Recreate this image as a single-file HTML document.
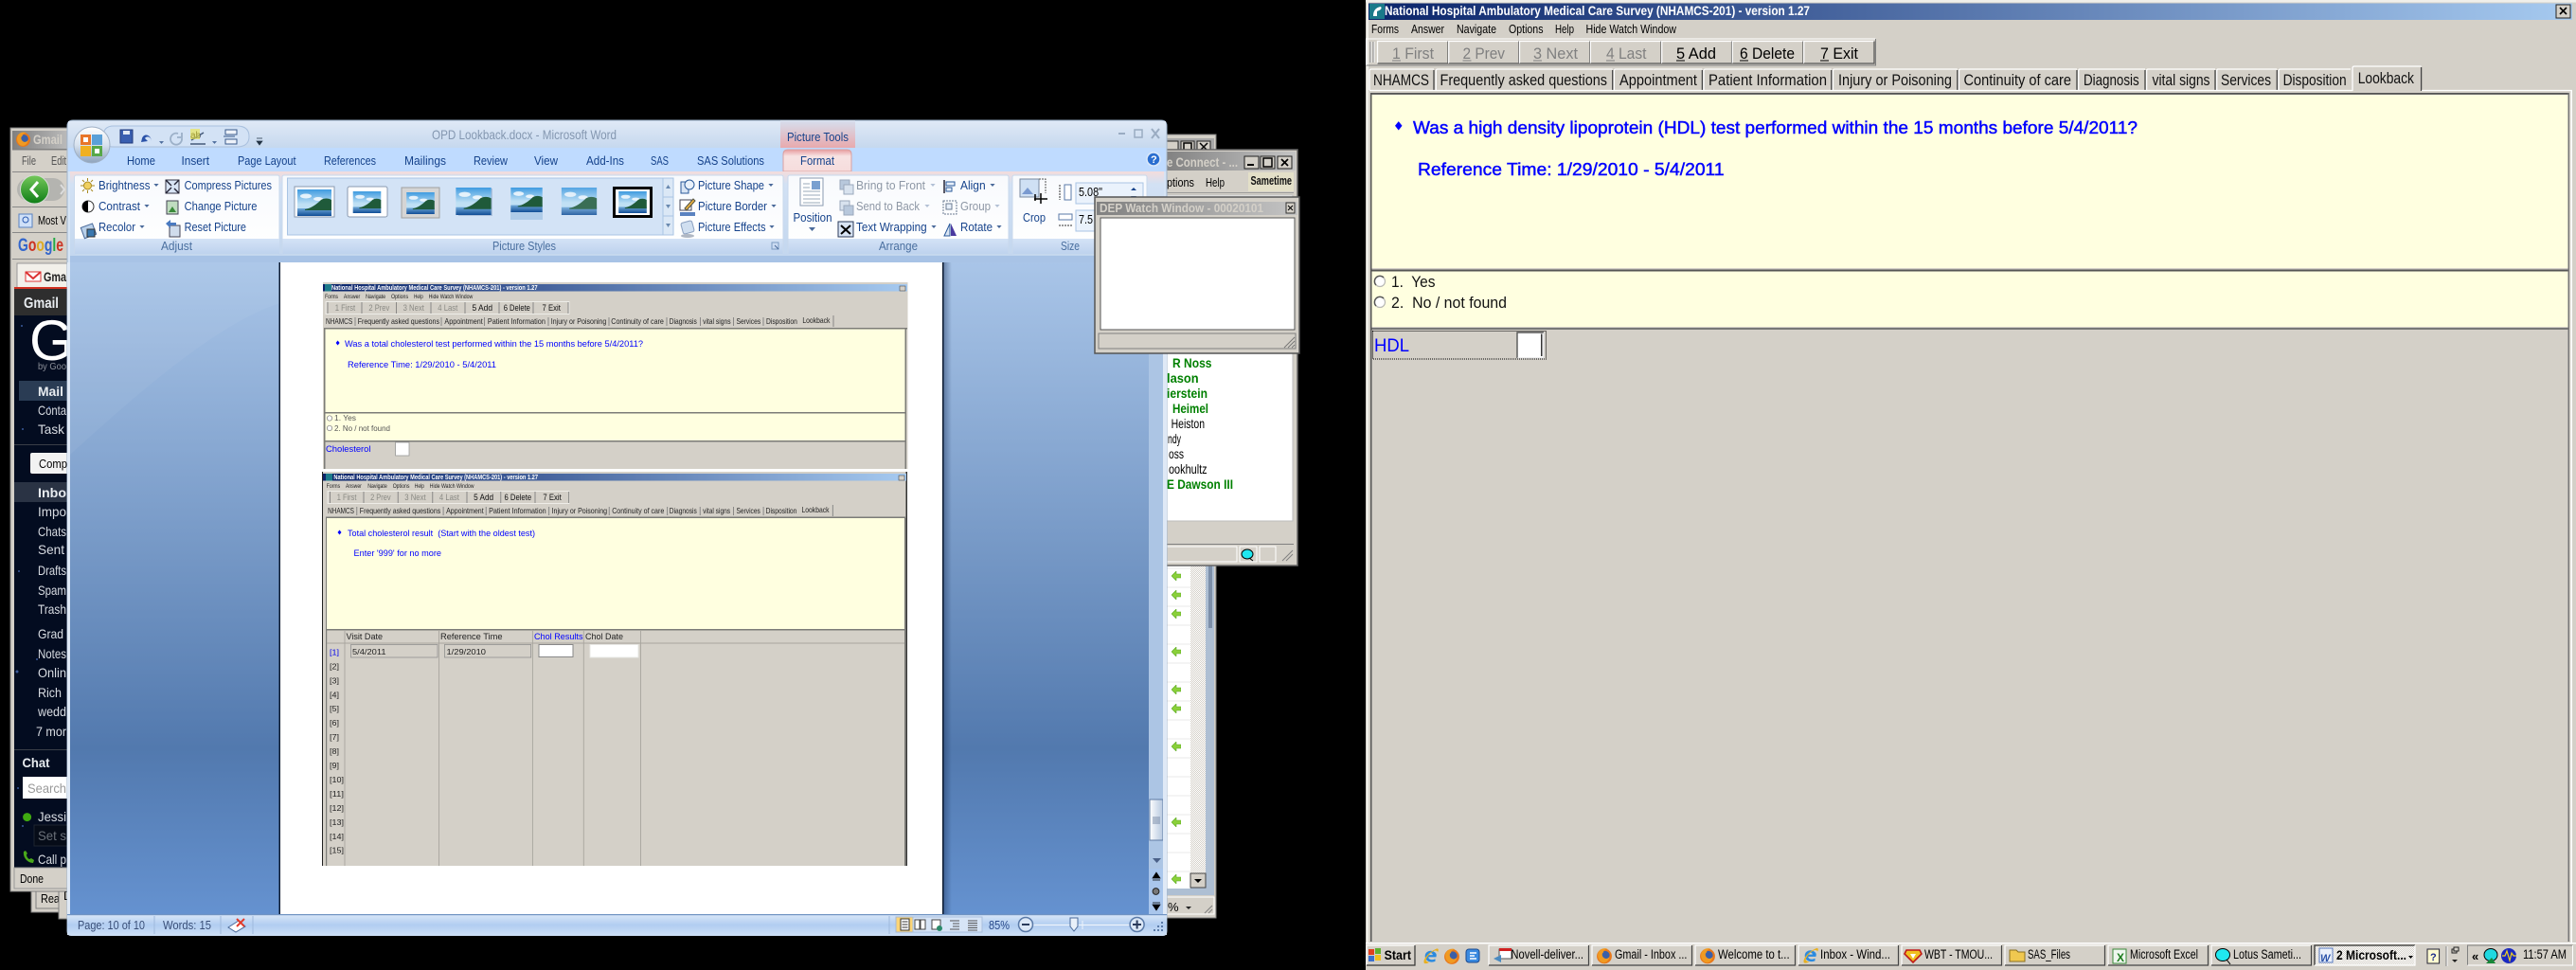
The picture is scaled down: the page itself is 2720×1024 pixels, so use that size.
<!DOCTYPE html>
<html><head><meta charset="utf-8"><title>Screenshot</title>
<style>
html,body{margin:0;padding:0;background:#000;width:2720px;height:1024px;overflow:hidden}
svg{display:block}
text{font-family:"Liberation Sans",sans-serif;white-space:pre}
.w{font-size:12.5px;fill:#15428b}
.g{font-size:12.5px;fill:#8d97a5}
.k{font-size:13px;fill:#000}
.gm{font-size:14px;fill:#d8dce2}
.gb{font-size:14px;fill:#e8ecf0;font-weight:bold}
.s{font-size:6.5px;fill:#222}
.sd{font-size:9.5px;fill:#8a8a84}
.sk{font-size:9.5px;fill:#111}
.st{font-size:8.5px;fill:#222}
.sb{font-size:9.5px;fill:#0000ff}
.sbb{font-size:9.5px;fill:#0000ff;font-weight:bold}
.m{font-size:12.5px;fill:#000}
.b{font-size:17px;fill:#000}
.d{font-size:17px;fill:#808080}
.t{font-size:16.5px;fill:#111}
.tb{font-size:13.5px;fill:#000}
.sg{font-size:14px;fill:#008000;font-weight:bold}
.q{font-size:18px;fill:#0000ff;stroke:#0000ff;stroke-width:.45px}
</style></head><body>
<svg xmlns="http://www.w3.org/2000/svg" width="2720" height="1024" viewBox="0 0 2720 1024">
<defs>
<linearGradient id="cap" x1="0" x2="1" y1="0" y2="0"><stop offset="0" stop-color="#0a246a"/><stop offset="1" stop-color="#a6caf0"/></linearGradient>
<linearGradient id="gcap" x1="0" x2="1" y1="0" y2="0"><stop offset="0" stop-color="#808080"/><stop offset="1" stop-color="#c4c4c4"/></linearGradient>
<linearGradient id="doc" x1="0" x2="0" y1="0" y2="1"><stop offset="0" stop-color="#a9c5e8"/><stop offset=".746" stop-color="#5279ae"/><stop offset="1" stop-color="#6592d0"/></linearGradient>
<linearGradient id="shd" x1="0" x2="1" y1="0" y2="0"><stop offset="0" stop-color="#1a3058" stop-opacity=".45"/><stop offset="1" stop-color="#1a3058" stop-opacity="0"/></linearGradient>
<linearGradient id="wt" x1="0" x2="0" y1="0" y2="1"><stop offset="0" stop-color="#dfe9f6"/><stop offset="1" stop-color="#c6d8ee"/></linearGradient>
<linearGradient id="grp" x1="0" x2="0" y1="0" y2="1"><stop offset="0" stop-color="#f8fafd"/><stop offset="1" stop-color="#fff"/></linearGradient>
<linearGradient id="lab" x1="0" x2="0" y1="0" y2="1"><stop offset="0" stop-color="#d4e3f6"/><stop offset="1" stop-color="#bed3ee"/></linearGradient>
<linearGradient id="pink" x1="0" x2="0" y1="0" y2="1"><stop offset="0" stop-color="#d6dfee"/><stop offset="1" stop-color="#e8a9ad"/></linearGradient>
<linearGradient id="pink2" x1="0" x2="0" y1="0" y2="1"><stop offset="0" stop-color="#e79c9f"/><stop offset=".3" stop-color="#f7e3e3"/><stop offset="1" stop-color="#f6dcdc"/></linearGradient>
<linearGradient id="rib" x1="0" x2="0" y1="0" y2="1"><stop offset="0" stop-color="#f3dcdc"/><stop offset=".15" stop-color="#d2e1f4"/><stop offset="1" stop-color="#c3d7ef"/></linearGradient>
<linearGradient id="stat" x1="0" x2="0" y1="0" y2="1"><stop offset="0" stop-color="#dbe8f8"/><stop offset=".5" stop-color="#b1cdf1"/><stop offset="1" stop-color="#cfe0f6"/></linearGradient>
<linearGradient id="sky" x1="0" x2="0" y1="0" y2="1"><stop offset="0" stop-color="#3f9be0"/><stop offset=".55" stop-color="#bfe0f4"/></linearGradient>
<linearGradient id="wat" x1="0" x2="0" y1="0" y2="1"><stop offset="0" stop-color="#6fa8d8"/><stop offset="1" stop-color="#114d96"/></linearGradient>
<linearGradient id="off" x1="0" x2="0" y1="0" y2="1"><stop offset="0" stop-color="#fff"/><stop offset=".5" stop-color="#d8e2ee"/><stop offset="1" stop-color="#8ea3bc"/></linearGradient>
<linearGradient id="grn" x1="0" x2="0" y1="0" y2="1"><stop offset="0" stop-color="#75c95b"/><stop offset="1" stop-color="#0e7d16"/></linearGradient>
<linearGradient id="thb" x1="0" x2="1" y1="0" y2="0"><stop offset="0" stop-color="#fff"/><stop offset=".5" stop-color="#d8e2ee"/><stop offset="1" stop-color="#b6c8e0"/></linearGradient>
<filter id="bl" x="-2%" y="-2%" width="104%" height="104%"><feGaussianBlur stdDeviation=".3"/></filter>
<pattern id="dith" width="2" height="2" patternUnits="userSpaceOnUse"><rect width="2" height="2" fill="#fff"/><rect width="1" height="1" fill="#d4d0c8"/><rect x="1" y="1" width="1" height="1" fill="#d4d0c8"/></pattern>
<symbol id="pic" viewBox="0 0 36 28" width="36" height="28">
<rect width="36" height="28" fill="url(#sky)"/>
<ellipse cx="9" cy="7" rx="6" ry="2.5" fill="#fff" opacity=".8"/><ellipse cx="22" cy="10" rx="5" ry="2" fill="#fff" opacity=".8"/>
<rect y="20" width="36" height="8" fill="url(#wat)"/>
<path d="M8 21 C14 20 20 16 25 11 C28 9 33 9 36 11 V22 H8Z" fill="#1f5a3a"/>
</symbol>
<symbol id="ff" viewBox="0 0 20 20" width="20" height="20">
<circle cx="10" cy="10.5" r="8.8" fill="#e8781a"/><circle cx="11" cy="9.5" r="5.2" fill="#3a5fa8"/><path d="M3 6 C5 2 10 0 14 2 C11 2 9 4 9 6 C7 7 7 10 9 12 C11 14 14 14 16 11 C16 15 12 19 8 18 C4 17 1 11 3 6Z" fill="#f09a22"/>
</symbol>
<symbol id="ie" viewBox="0 0 20 20" width="20" height="20">
<path d="M16 11 H7 C7 14 11 15 15 13 V16 C10 18 3 16 3 10 C3 4 10 2 14 5 C17 7 16.5 9 16 11Z M7 8.5 H12 C12 5.5 7.5 5.5 7 8.5Z" fill="#2a8ae0" fill-rule="evenodd"/>
<path d="M2 18 C0 14 7 5 17 1 C19 1 19 3 18 5 C17 3 15 3 13 4 C8 7 5 11 4 15 C5 16 6 17 8 17 C6 18.5 3 19 2 18Z" fill="#e8b020"/>
</symbol>
<symbol id="ar" viewBox="0 0 7 4" width="7" height="4"><path d="M0 0H7L3.5 4Z" fill="#4a6a9a"/></symbol>
<symbol id="gar" viewBox="0 0 10 10" width="10" height="10"><path d="M5 0 L0 5 L5 10 V7 H10 V3 H5Z" fill="#8ad03a" stroke="#5aa820" stroke-width=".6"/></symbol>
<symbol id="dia" viewBox="0 0 8 10" width="8" height="10"><path d="M4 0 L8 5 L4 10 L0 5Z" fill="#0000ff"/></symbol>
</defs>

<rect width="2720" height="1024" fill="#000"/>

<!-- Back windows left -->
<rect x="33" y="900" width="60" height="63" fill="#d4d0c8" stroke="#808080"/>
<rect x="38" y="940" width="40" height="19" fill="#d4d0c8" stroke="#808080"/>
<text class="k" x="43" y="953" textLength="20" lengthAdjust="spacingAndGlyphs">Rea</text>
<rect x="62" y="900" width="30" height="70" fill="#d4d0c8" stroke="#808080"/>
<text class="k" x="67" y="950">D</text>

<!-- Firefox Gmail window -->
<rect x="11" y="135" width="70" height="806" fill="#d4d0c8" stroke="#808080"/>
<rect x="13" y="138" width="68" height="19" fill="url(#gcap)"/>
<use href="#ff" x="16" y="138" width="17" height="18"/>
<text x="35" y="152" font-size="14" font-weight="bold" fill="#d4d0c8" textLength="31" lengthAdjust="spacingAndGlyphs">Gmail</text>
<rect x="13" y="157" width="68" height="1.5" fill="#808080"/>
<text class="k" x="23" y="174" fill="#555" textLength="15" lengthAdjust="spacingAndGlyphs" style="fill:#555">File</text>
<text class="k" x="54" y="174" textLength="16" lengthAdjust="spacingAndGlyphs" style="fill:#555">Edit</text>
<rect x="13" y="181" width="68" height="1" fill="#888"/>
<rect x="18" y="188" width="50" height="24" rx="12" fill="#b4b4b0"/>
<circle cx="36.5" cy="200" r="15" fill="url(#grn)" stroke="#d8dcd8"/>
<path d="M40 192 L33 200 L40 208" fill="none" stroke="#fff" stroke-width="3"/>
<path d="M64 195 L68 200 L64 205" fill="none" stroke="#ddd" stroke-width="2"/>
<rect x="13" y="218" width="68" height="1" fill="#888"/>
<rect x="20" y="226" width="14" height="14" fill="#cfe0f8" stroke="#5a82c0"/>
<circle cx="27" cy="232" r="3" fill="none" stroke="#2a5ab0"/>
<text class="k" x="40" y="237" textLength="30" lengthAdjust="spacingAndGlyphs">Most V</text>
<rect x="13" y="245" width="68" height="1" fill="#888"/>
<text x="19" y="265" font-size="19" font-family="Liberation Serif" textLength="48" lengthAdjust="spacingAndGlyphs" font-weight="bold"><tspan fill="#3366cc">G</tspan><tspan fill="#cc3322">o</tspan><tspan fill="#ddaa22">o</tspan><tspan fill="#3366cc">g</tspan><tspan fill="#22aa44">l</tspan><tspan fill="#cc3322">e</tspan></text>
<rect x="13" y="273" width="68" height="1" fill="#888"/>
<rect x="18" y="278" width="60" height="26" fill="#f2f0ea" stroke="#999"/>
<path d="M27 287 H43 V297 H27Z" fill="#fff" stroke="#d33"/><path d="M27 287 L35 294 L43 287" fill="none" stroke="#d33" stroke-width="2"/>
<text x="46" y="297" font-size="13.5" font-weight="bold" fill="#222" textLength="24" lengthAdjust="spacingAndGlyphs">Gma</text>
<rect x="15" y="303" width="60" height="2" fill="#d03020"/>
<rect x="15" y="305" width="60" height="28" fill="#2e2e2e"/>
<text class="gb" x="25" y="325" font-size="16" textLength="37" lengthAdjust="spacingAndGlyphs" style="font-size:16px">Gmail</text>
<rect x="15" y="333" width="60" height="583" fill="#030c20"/>
<g fill="#3a5a9a"><circle cx="20" cy="603" r="1"/><circle cx="18" cy="709" r="1.5"/><circle cx="39" cy="696" r="1"/><circle cx="52" cy="430" r="1"/><circle cx="24" cy="453" r="1"/><circle cx="19" cy="832" r="1"/><circle cx="24" cy="872" r="1"/><circle cx="23" cy="344" r="1"/><circle cx="52" cy="484" r="1"/></g>
<text x="31" y="380" font-family="Liberation Serif" font-size="60" fill="#fff">G</text>
<text x="40" y="390" font-family="Liberation Serif" font-size="10" fill="#8a8f98" textLength="30" lengthAdjust="spacingAndGlyphs">by Goo</text>
<rect x="20" y="402" width="55" height="21" fill="#2a3c54"/>
<text class="gb" x="40" y="418" textLength="27" lengthAdjust="spacingAndGlyphs">Mail</text>
<text class="gm" x="40" y="438" textLength="30" lengthAdjust="spacingAndGlyphs">Conta</text>
<text class="gm" x="40" y="458" textLength="28" lengthAdjust="spacingAndGlyphs">Task</text>
<rect x="15" y="469" width="60" height="1" fill="#3a3f48"/>
<rect x="32" y="478" width="44" height="22" rx="2" fill="#f2f2f2"/>
<text class="k" x="41" y="494" textLength="30" lengthAdjust="spacingAndGlyphs">Comp</text>
<rect x="15" y="509" width="60" height="21" fill="#2a3344"/>
<text class="gb" x="40" y="525" textLength="30" lengthAdjust="spacingAndGlyphs">Inbo</text>
<text class="gm" x="40" y="545" textLength="30" lengthAdjust="spacingAndGlyphs">Impo</text>
<text class="gm" x="40" y="566" textLength="30" lengthAdjust="spacingAndGlyphs">Chats</text>
<text class="gm" x="40" y="585" textLength="28" lengthAdjust="spacingAndGlyphs">Sent</text>
<text class="gm" x="40" y="607" textLength="30" lengthAdjust="spacingAndGlyphs">Drafts</text>
<text class="gm" x="40" y="628" textLength="30" lengthAdjust="spacingAndGlyphs">Spam</text>
<text class="gm" x="40" y="648" textLength="30" lengthAdjust="spacingAndGlyphs">Trash</text>
<text class="gm" x="40" y="674" textLength="27" lengthAdjust="spacingAndGlyphs">Grad</text>
<text class="gm" x="40" y="695" textLength="30" lengthAdjust="spacingAndGlyphs">Notes</text>
<text class="gm" x="40" y="715" textLength="30" lengthAdjust="spacingAndGlyphs">Onlin</text>
<text class="gm" x="40" y="736" textLength="25" lengthAdjust="spacingAndGlyphs">Rich</text>
<text class="gm" x="40" y="756" textLength="30" lengthAdjust="spacingAndGlyphs">wedd</text>
<text class="gm" x="38" y="777" textLength="32" lengthAdjust="spacingAndGlyphs">7 mor</text>
<rect x="15" y="791" width="60" height="1" fill="#3a3f48"/>
<text class="gb" x="23.5" y="810" textLength="29" lengthAdjust="spacingAndGlyphs">Chat</text>
<rect x="24" y="820" width="50" height="23" fill="#fff"/>
<text x="29" y="837" font-size="14" fill="#999" textLength="41" lengthAdjust="spacingAndGlyphs">Search</text>
<circle cx="28.6" cy="862.6" r="4.5" fill="#3faa10"/>
<text class="gm" x="40" y="867" textLength="30" lengthAdjust="spacingAndGlyphs">Jessi</text>
<rect x="36" y="871" width="40" height="22" fill="#060c18" stroke="#1d2430"/>
<text x="40" y="887" font-size="14" fill="#6a7078" textLength="30" lengthAdjust="spacingAndGlyphs">Set s</text>
<path d="M25 899 C24 905 29 911 35 911 L36 908 L33 906 L31 907 C29 906 28 904 28 902 L29 901 L27 898Z" fill="#49a81a"/>
<text class="gm" x="40" y="912" textLength="30" lengthAdjust="spacingAndGlyphs">Call p</text>
<rect x="15" y="916" width="60" height="22" fill="#d4d0c8" stroke="#999"/>
<text class="k" x="21" y="932" textLength="25" lengthAdjust="spacingAndGlyphs">Done</text>

<!-- Back windows right -->
<rect x="1225" y="142" width="59" height="30" fill="#d4d0c8" stroke="#808080"/>
<rect x="1228" y="146" width="54" height="16" fill="#a8a8a8"/>
<rect x="1232" y="149" width="12" height="12" fill="#d4d0c8" stroke="#222"/>
<rect x="1247" y="149" width="14" height="12" fill="#d4d0c8" stroke="#222"/><rect x="1250" y="151" width="8" height="8" fill="none" stroke="#000" stroke-width="1.5"/>
<rect x="1264" y="149" width="14" height="12" fill="#d4d0c8" stroke="#222"/><path d="M1267 151 L1275 159 M1275 151 L1267 159" stroke="#000" stroke-width="1.5"/>

<!-- list window with arrows -->
<rect x="1225" y="590" width="59" height="379" fill="#d4d0c8" stroke="#808080"/>
<rect x="1230" y="595" width="52" height="350" fill="#aebfd3"/>
<rect x="1230" y="597" width="27" height="341" fill="#fff"/>
<g stroke="#e8e8e8"><path d="M1230 600H1257M1230 620H1257M1230 640H1257M1230 660H1257M1230 680H1257M1230 700H1257M1230 720H1257M1230 740H1257M1230 760H1257M1230 780H1257M1230 800H1257M1230 820H1257M1230 840H1257M1230 860H1257M1230 880H1257M1230 900H1257M1230 920H1257"/></g>
<rect x="1257" y="597" width="16" height="325" fill="url(#dith)"/>
<rect x="1257" y="922" width="16" height="15" fill="#d4d0c8" stroke="#444"/><path d="M1261 928 H1269 L1265 932Z" fill="#000"/>
<rect x="1276" y="597" width="4" height="66" fill="#7d8fa8"/>
<use href="#gar" x="1237" y="603"/><use href="#gar" x="1237" y="623"/><use href="#gar" x="1237" y="643"/><use href="#gar" x="1237" y="683"/><use href="#gar" x="1237" y="723"/><use href="#gar" x="1237" y="743"/><use href="#gar" x="1237" y="783"/><use href="#gar" x="1237" y="863"/><use href="#gar" x="1237" y="923"/>
<rect x="1230" y="947" width="52" height="18" fill="#d4d0c8" stroke="#fff"/>
<path d="M1252 957 H1258 L1255 960Z" fill="#222"/>
<text class="k" x="1233" y="962">%</text>
<path d="M1272 964 L1280 956 M1276 964 L1280 960" stroke="#808080"/>

<!-- Sametime -->
<rect x="1225" y="158" width="145" height="439" fill="#d4d0c8" stroke="#666" stroke-width="1.5"/>
<rect x="1228" y="160" width="140" height="20" fill="url(#gcap)"/>
<text x="1232" y="176" font-size="14" font-weight="bold" fill="#d4d0c8" textLength="75" lengthAdjust="spacingAndGlyphs">e Connect - ...</text>
<rect x="1314" y="165" width="15" height="13" fill="#d4d0c8" stroke="#222"/><rect x="1317" y="173" width="7" height="2" fill="#000"/>
<rect x="1331" y="165" width="15" height="13" fill="#d4d0c8" stroke="#222"/><rect x="1334" y="167" width="9" height="9" fill="none" stroke="#000" stroke-width="1.5"/>
<rect x="1349" y="165" width="15" height="13" fill="#d4d0c8" stroke="#222"/><path d="M1353 168 L1360 175 M1360 168 L1353 175" stroke="#000" stroke-width="1.7"/>
<text class="k" x="1232" y="197" textLength="29" lengthAdjust="spacingAndGlyphs">ptions</text>
<text class="k" x="1273" y="197" textLength="20" lengthAdjust="spacingAndGlyphs">Help</text>
<rect x="1318" y="182" width="48" height="20" fill="#e4e0c8"/>
<text x="1320.5" y="195" font-size="13" font-weight="bold" fill="#111" textLength="43.5" lengthAdjust="spacingAndGlyphs">Sametime</text>
<rect x="1228" y="203" width="138" height="1" fill="#999"/>
<rect x="1228" y="206" width="137" height="344" fill="#fff" stroke="#bbb"/>
<text class="sg" x="1238" y="388" textLength="41.5" lengthAdjust="spacingAndGlyphs">R Noss</text>
<text class="sg" x="1232" y="404" textLength="33.6" lengthAdjust="spacingAndGlyphs">lason</text>
<text class="sg" x="1232" y="420" textLength="43" lengthAdjust="spacingAndGlyphs">ierstein</text>
<text class="sg" x="1238" y="436" textLength="38" lengthAdjust="spacingAndGlyphs">Heimel</text>
<text x="1236.6" y="452" font-size="14" fill="#000" textLength="35.4" lengthAdjust="spacingAndGlyphs">Heiston</text>
<text x="1233" y="468" font-size="14" fill="#000" textLength="14" lengthAdjust="spacingAndGlyphs">ndy</text>
<text x="1234" y="484" font-size="14" fill="#000" textLength="16" lengthAdjust="spacingAndGlyphs">oss</text>
<text x="1234" y="500" font-size="14" fill="#000" textLength="40.6" lengthAdjust="spacingAndGlyphs">ookhultz</text>
<text class="sg" x="1232" y="516" textLength="70" lengthAdjust="spacingAndGlyphs">E Dawson III</text>
<rect x="1228" y="574" width="138" height="1" fill="#808080"/>
<rect x="1228" y="577" width="78" height="16" fill="#d4d0c8" stroke="#fff"/>
<rect x="1309" y="577" width="18" height="16" fill="#d4d0c8" stroke="#fff"/>
<ellipse cx="1317" cy="585" rx="6" ry="5" fill="#20e8f0" stroke="#000"/><path d="M1319 589 L1323 592" stroke="#000"/>
<rect x="1330" y="577" width="17" height="16" fill="#d4d0c8" stroke="#fff"/>
<path d="M1354 592 L1365 581 M1358 592 L1365 585" stroke="#808080"/>

<!-- WORD -->
<path d="M71 133 Q71 127 77 127 H1226 Q1232 127 1232 133 V983 Q1232 987 1228 987 H75 Q71 987 71 983Z" fill="#d6e4f5" stroke="#a0b4cc"/>
<rect x="72" y="128" width="1159" height="28" fill="url(#wt)"/>
<rect x="72" y="156" width="1159" height="25" fill="#bfdbff"/>
<path d="M109 144 Q109 133 120 133 H250 Q263 133 263 144 Q263 155 250 155 H120 Q109 155 109 144Z" fill="#d3e2f5" stroke="#a9c0de"/>
<rect x="127" y="143" width="13" height="14" fill="#3a5fb0" stroke="#223a7a" transform="translate(0,-6)"/>
<rect x="130" y="138" width="7" height="4" fill="#e0e8f4"/>
<path d="M150 146 C152 140 160 142 160 150 C160 144 155 143 153 146 L156 149 L149 150Z" fill="#2a52a8"/>
<use href="#ar" x="168" y="149" width="5" height="3"/>
<path d="M188 141 A6 6 0 1 0 192 146 M192 140 V145 H187" fill="none" stroke="#9cb0c8" stroke-width="1.8"/>
<text x="201" y="146" font-size="10" fill="#222">ab</text>
<path d="M202 148 L215 140 M201 152 H217" stroke="#445a7a" stroke-width="1.5"/><rect x="201" y="136" width="10" height="11" fill="#f0e840" opacity=".6"/>
<use href="#ar" x="224" y="149" width="5" height="3"/>
<path d="M238 137 H250 V142 H238Z M238 147 H250 V152 H238Z M236 144 H248" fill="#eef3fa" stroke="#3a5a8a"/>
<path d="M271 149 H277 L274 153Z M271 146 H277" fill="#234" stroke="#234" stroke-width=".7"/>
<circle cx="97" cy="153" r="19" fill="url(#off)" stroke="#9fb0c5"/>
<rect x="85" y="142" width="11" height="11" fill="#e8762a"/><rect x="97" y="142" width="11" height="11" fill="#5aa0d8"/><rect x="85" y="154" width="11" height="11" fill="#f0b020"/><rect x="97" y="154" width="11" height="11" fill="#58a848"/>
<rect x="88" y="145" width="5" height="5" fill="#fff"/><rect x="100" y="157" width="5" height="5" fill="#fff"/>
<text x="456" y="147" font-size="14" fill="#8497b0" textLength="195" lengthAdjust="spacingAndGlyphs">OPD Lookback.docx - Microsoft Word</text>
<rect x="824" y="127" width="79" height="29" fill="url(#pink)"/>
<text class="w" x="831" y="149" textLength="65" lengthAdjust="spacingAndGlyphs">Picture Tools</text>
<path d="M1181 141 H1188" stroke="#9aacc2" stroke-width="2"/><rect x="1198" y="137" width="8" height="8" fill="none" stroke="#9aacc2" stroke-width="1.5"/><path d="M1216 136 L1224 146 M1224 136 L1216 146" stroke="#9aacc2" stroke-width="2"/>
<text class="w" x="134" y="174" textLength="30" lengthAdjust="spacingAndGlyphs">Home</text>
<text class="w" x="191.5" y="174" textLength="29.5" lengthAdjust="spacingAndGlyphs">Insert</text>
<text class="w" x="251" y="174" textLength="61.5" lengthAdjust="spacingAndGlyphs">Page Layout</text>
<text class="w" x="342" y="174" textLength="55" lengthAdjust="spacingAndGlyphs">References</text>
<text class="w" x="427" y="174" textLength="44" lengthAdjust="spacingAndGlyphs">Mailings</text>
<text class="w" x="500" y="174" textLength="36" lengthAdjust="spacingAndGlyphs">Review</text>
<text class="w" x="564" y="174" textLength="25" lengthAdjust="spacingAndGlyphs">View</text>
<text class="w" x="619" y="174" textLength="40" lengthAdjust="spacingAndGlyphs">Add-Ins</text>
<text class="w" x="687" y="174" textLength="19" lengthAdjust="spacingAndGlyphs">SAS</text>
<text class="w" x="736" y="174" textLength="71" lengthAdjust="spacingAndGlyphs">SAS Solutions</text>
<path d="M827 181 V163 Q827 158 832 158 H894 Q899 158 899 163 V181Z" fill="url(#pink2)" stroke="#d9a0a0"/>
<text class="w" x="845" y="174" textLength="36" lengthAdjust="spacingAndGlyphs">Format</text>
<circle cx="1218" cy="168" r="7" fill="#2a6ed0" stroke="#dbe8f8" stroke-width="1.5"/><text x="1215" y="172" font-size="11" font-weight="bold" fill="#fff">?</text>

<rect x="74" y="181" width="1155" height="89" fill="url(#rib)"/>
<rect x="78.5" y="185" width="216.5" height="83" rx="2" fill="url(#grp)" stroke="#c8d8ec"/>
<rect x="298" y="185" width="529" height="83" rx="2" fill="url(#grp)" stroke="#c8d8ec"/>
<rect x="832" y="185" width="233" height="83" rx="2" fill="url(#grp)" stroke="#c8d8ec"/>
<rect x="1069" y="185" width="142" height="83" rx="2" fill="url(#grp)" stroke="#c8d8ec"/>
<rect x="79" y="252" width="216" height="16" fill="url(#lab)"/><rect x="298.5" y="252" width="528" height="16" fill="url(#lab)"/><rect x="832.5" y="252" width="232" height="16" fill="url(#lab)"/><rect x="1069.5" y="252" width="141" height="16" fill="url(#lab)"/>
<text class="w" x="170" y="264" textLength="33" lengthAdjust="spacingAndGlyphs" style="fill:#4a6f9f">Adjust</text>
<text class="w" x="520" y="264" textLength="67" lengthAdjust="spacingAndGlyphs" style="fill:#4a6f9f">Picture Styles</text>
<text class="w" x="928" y="264" textLength="41" lengthAdjust="spacingAndGlyphs" style="fill:#4a6f9f">Arrange</text>
<text class="w" x="1120" y="264" textLength="20" lengthAdjust="spacingAndGlyphs" style="fill:#4a6f9f">Size</text>
<!-- Adjust -->
<circle cx="92.5" cy="196" r="4" fill="#f0d060" stroke="#a88a20"/><path d="M92.5 188V191M92.5 201V204M85 196H88M97 196H100M87 190L89 192M96 200L98 202M87 202L89 200M96 192L98 190" stroke="#a88a20"/>
<text class="w" x="104" y="200" textLength="54.5" lengthAdjust="spacingAndGlyphs">Brightness</text><use href="#ar" x="162" y="194" width="6" height="3"/>
<circle cx="93" cy="218" r="6" fill="#fff" stroke="#333"/><path d="M93 212 A6 6 0 0 0 93 224Z" fill="#000"/>
<text class="w" x="104" y="222" textLength="44" lengthAdjust="spacingAndGlyphs">Contrast</text><use href="#ar" x="152" y="216" width="6" height="3"/>
<rect x="87" y="238" width="13" height="12" fill="#b8d0ea" stroke="#4a6a9a" transform="rotate(-20 93 244)"/><rect x="92" y="242" width="8" height="8" fill="#3a78b0" stroke="#333"/>
<text class="w" x="104" y="244" textLength="39" lengthAdjust="spacingAndGlyphs">Recolor</text><use href="#ar" x="147" y="238" width="6" height="3"/>
<rect x="175" y="190" width="14" height="14" fill="#d8e4f4" stroke="#334"/><path d="M175 190 L181 196 M189 190 L184 195 M175 204 L181 198 M189 204 L184 199" stroke="#223" stroke-width="1.4"/>
<text class="w" x="194.6" y="200" textLength="92.4" lengthAdjust="spacingAndGlyphs">Compress Pictures</text>
<rect x="176" y="212" width="12" height="14" fill="#c0dcc0" stroke="#445"/><path d="M178 224 L182 218 L186 224Z" fill="#3a8a3a"/>
<text class="w" x="194.6" y="222" textLength="76.8" lengthAdjust="spacingAndGlyphs">Change Picture</text>
<rect x="179" y="238" width="11" height="12" fill="#d0dcec" stroke="#445"/><path d="M175 236 L180 232 V235 H186 V238 H180 V241Z" fill="#4a7ac0"/>
<text class="w" x="194.6" y="244" textLength="65.4" lengthAdjust="spacingAndGlyphs">Reset Picture</text>
<!-- gallery -->
<rect x="303.5" y="188" width="397" height="60" fill="#d3e3f6" stroke="#a9c4e4"/>
<rect x="700" y="188" width="11" height="20" fill="#dbe8f6" stroke="#a9c4e4"/><rect x="700" y="208" width="11" height="20" fill="#dbe8f6" stroke="#a9c4e4"/><rect x="700" y="228" width="11" height="20" fill="#dbe8f6" stroke="#a9c4e4"/>
<path d="M703 199 H708 L705.5 195Z M703 216 H708 L705.5 220Z M703 236 H708 L705.5 240Z" fill="#6a8ab0"/>
<rect x="311" y="197" width="42" height="32" fill="#fff" stroke="#8a9ab0"/><use href="#pic" x="314" y="200"/>
<rect x="367" y="197" width="42" height="32" rx="2" fill="#fff" stroke="#8a9ab0"/><use href="#pic" x="372" y="202" width="31" height="23"/>
<rect x="424" y="198" width="40" height="32" fill="#d5d5d5" stroke="#a0a0a0"/><use href="#pic" x="428" y="203" width="32" height="23"/>
<rect x="484" y="199" width="36" height="29" fill="#8aa0c0" opacity=".5"/><use href="#pic" x="481" y="198" width="38" height="29"/>
<use href="#pic" x="537" y="198" width="38" height="26"/><rect x="539" y="224" width="34" height="8" fill="#9ec0e2" opacity=".7"/>
<use href="#pic" x="592" y="198" width="39" height="29" opacity=".85"/>
<rect x="647" y="197" width="42" height="33" fill="#000"/><rect x="650" y="200" width="36" height="27" fill="#fff"/><use href="#pic" x="652" y="202" width="32" height="23"/>
<!-- picture shape etc -->
<rect x="719" y="192" width="8" height="12" fill="#d8e4f4" stroke="#2a5a9a"/><circle cx="728" cy="195" r="5" fill="#e8f0fa" stroke="#2a5a9a"/>
<text class="w" x="737" y="200" textLength="70" lengthAdjust="spacingAndGlyphs">Picture Shape</text><use href="#ar" x="811" y="194" width="6" height="3"/>
<path d="M718 211 H730 V222 H718Z" fill="#fff" stroke="#445"/><path d="M723 220 L732 210 L734 212 L725 222Z" fill="#e8b040" stroke="#554"/><rect x="718" y="224" width="16" height="4" fill="#5a82c0"/>
<text class="w" x="737" y="222" textLength="73" lengthAdjust="spacingAndGlyphs">Picture Border</text><use href="#ar" x="814" y="216" width="6" height="3"/>
<rect x="720" y="234" width="12" height="12" rx="2" fill="#d0dff0" stroke="#8aa0c0" transform="rotate(-15 726 240)"/><ellipse cx="726" cy="249" rx="7" ry="2" fill="#b0b8c4"/>
<text class="w" x="737" y="244" textLength="71.5" lengthAdjust="spacingAndGlyphs">Picture Effects</text><use href="#ar" x="812" y="238" width="6" height="3"/>
<rect x="815" y="256" width="7" height="7" fill="none" stroke="#7a9ac0"/><path d="M818 259 L822 263" stroke="#4a6a9a"/>
<!-- arrange -->
<rect x="845" y="188" width="24" height="29" fill="#fff" stroke="#8a9ab0"/><rect x="857" y="191" width="9" height="9" fill="#7aa0d0"/><path d="M848 194H855M848 198H855M848 202H866M848 206H866M848 210H866M848 214H866" stroke="#9aa8b8"/>
<text class="w" x="837.5" y="234" textLength="41" lengthAdjust="spacingAndGlyphs">Position</text>
<use href="#ar" x="854" y="240" width="7" height="4"/>
<rect x="887" y="190" width="10" height="10" fill="#b8c8dc" stroke="#9aa8bc"/><rect x="891" y="195" width="10" height="10" fill="#d8e2ee" stroke="#9aa8bc"/>
<text class="g" x="904" y="200" textLength="73" lengthAdjust="spacingAndGlyphs">Bring to Front</text><use href="#ar" x="982" y="194" width="6" height="3" opacity=".4"/>
<rect x="887" y="212" width="10" height="10" fill="#d8e2ee" stroke="#9aa8bc"/><rect x="891" y="217" width="10" height="10" fill="#b8c8dc" stroke="#9aa8bc"/>
<text class="g" x="904" y="222" textLength="67" lengthAdjust="spacingAndGlyphs">Send to Back</text><use href="#ar" x="976" y="216" width="6" height="3" opacity=".4"/>
<rect x="885" y="234" width="16" height="16" fill="#d8e4f4" stroke="#2a3a5a"/><path d="M888 238 L898 247 M898 238 L888 247" stroke="#000" stroke-width="2"/>
<text class="w" x="904" y="244" textLength="74.6" lengthAdjust="spacingAndGlyphs">Text Wrapping</text><use href="#ar" x="983" y="238" width="6" height="3"/>
<path d="M997 190 V204" stroke="#223" stroke-width="1.5"/><rect x="999" y="192" width="9" height="4" fill="#e8f0fa" stroke="#2a5a9a"/><rect x="999" y="198" width="6" height="4" fill="#e8f0fa" stroke="#2a5a9a"/>
<text class="w" x="1014" y="200" textLength="26.6" lengthAdjust="spacingAndGlyphs">Align</text><use href="#ar" x="1045" y="194" width="6" height="3"/>
<rect x="996" y="212" width="14" height="14" fill="none" stroke="#6a7a90" stroke-dasharray="2 1"/><rect x="999" y="215" width="6" height="6" fill="#e8f0fa" stroke="#6a7a90"/>
<text class="g" x="1014" y="222" textLength="32" lengthAdjust="spacingAndGlyphs">Group</text><use href="#ar" x="1050" y="216" width="6" height="3" opacity=".4"/>
<path d="M997 249 L1003 236 V249Z" fill="#dbe6f4" stroke="#2a5a9a"/><path d="M1004 249 V236 L1010 249Z" fill="#4a3aa0"/>
<text class="w" x="1014" y="244" textLength="34" lengthAdjust="spacingAndGlyphs">Rotate</text><use href="#ar" x="1052" y="238" width="6" height="3"/>
<!-- size -->
<rect x="1077" y="189" width="20" height="19" fill="#cfe0f4" stroke="#7a8aa0"/><path d="M1079 205 L1085 198 L1091 205Z" fill="#7a9ad0"/>
<path d="M1097 189 H1104 V204" fill="none" stroke="#555" stroke-dasharray="2 1"/><path d="M1092 210 H1106 M1099 204 V215 M1093 205 V212 M1100 210" stroke="#000" stroke-width="1.5" fill="none"/>
<text class="w" x="1080" y="234" textLength="24" lengthAdjust="spacingAndGlyphs">Crop</text>
<rect x="1124" y="195" width="7" height="16" fill="#fff" stroke="#5a7aa8"/><path d="M1119 195 V211" stroke="#333" stroke-dasharray="2 1"/>
<rect x="1136" y="193" width="71" height="22" fill="#eaf2fc" stroke="#a9c4e4"/>
<text class="k" x="1139" y="207" textLength="25" lengthAdjust="spacingAndGlyphs">5.08"</text>
<path d="M1194 201 H1200 L1197 198Z M1194 207 H1200 L1197 210Z" fill="#15428b"/>
<rect x="1118" y="226" width="14" height="6" fill="#fff" stroke="#5a7aa8"/><path d="M1118 238 H1132" stroke="#333" stroke-dasharray="2 1"/>
<rect x="1136" y="222" width="71" height="22" fill="#eaf2fc" stroke="#a9c4e4"/>
<text class="k" x="1139" y="236" textLength="15" lengthAdjust="spacingAndGlyphs">7.5</text>

<!-- Document area -->
<rect x="74" y="270" width="1155" height="7" fill="#a8c3e6"/>
<rect x="74" y="277" width="1139" height="688" fill="url(#doc)"/>
<path d="M74 480 C140 420 230 340 296 320 V277 H74Z" fill="#fff" opacity=".05"/>
<rect x="996" y="277" width="9" height="688" fill="url(#shd)"/>
<rect x="296" y="277" width="699" height="688" fill="#fff"/>
<rect x="294.5" y="277" width="1.5" height="688" fill="#0c1a30"/><rect x="995" y="277" width="1.5" height="688" fill="#0c1a30"/>
<!-- scrollbar -->
<rect x="1213" y="277" width="15" height="640" fill="#8fb0d8" opacity=".6"/>
<rect x="1214" y="844" width="14" height="43" fill="url(#thb)" stroke="#5f7ba5"/>
<path d="M1217 863H1225M1217 865H1225M1217 867H1225M1217 869H1225" stroke="#7a8ca8"/>
<path d="M1217 906H1226L1221.5 911Z" fill="#4a6088"/>
<rect x="1213" y="917" width="15" height="48" fill="#a9c6ec"/>
<path d="M1217 929H1225M1221 921L1217 927H1225Z" fill="#000" stroke="#000" stroke-width=".7"/>
<circle cx="1220.5" cy="941" r="3.4" fill="#777" stroke="#222"/>
<path d="M1217 953H1225M1221 961L1217 955H1225Z" fill="#000" stroke="#000" stroke-width=".7"/>
<rect x="1228" y="277" width="4" height="710" fill="#dfe9f6"/>
<rect x="71" y="277" width="3" height="710" fill="#dfe9f6"/>

<!-- Embedded screenshots -->
<g filter="url(#bl)">
<!-- shot 1 -->
<rect x="341" y="298" width="617.5" height="197" fill="#d4d0c8"/>
<rect x="341" y="300" width="617" height="7.5" fill="url(#cap)"/>
<rect x="343" y="300" width="7" height="7.5" fill="#1a7a8a"/>
<text x="350" y="306" font-size="7" font-weight="bold" fill="#fff" textLength="217.5" lengthAdjust="spacingAndGlyphs">National Hospital Ambulatory Medical Care Survey (NHAMCS-201) - version 1.27</text>
<rect x="950" y="302" width="6" height="5" fill="#d4d0c8" stroke="#333" stroke-width=".5"/>
<text class="s" x="343.1" y="315" textLength="13.9" lengthAdjust="spacingAndGlyphs">Forms</text>
<text class="s" x="362.9" y="315" textLength="17.3" lengthAdjust="spacingAndGlyphs">Answer</text>
<text class="s" x="386.1" y="315" textLength="21" lengthAdjust="spacingAndGlyphs">Navigate</text>
<text class="s" x="413" y="315" textLength="18.1" lengthAdjust="spacingAndGlyphs">Options</text>
<text class="s" x="437" y="315" textLength="9.7" lengthAdjust="spacingAndGlyphs">Help</text>
<text class="s" x="452.6" y="315" textLength="46.7" lengthAdjust="spacingAndGlyphs">Hide Watch Window</text>
<rect x="344" y="318.5" width="257" height="13" fill="none" stroke="#f4f4f0" stroke-width=".8"/>
<path d="M382 319V331M418.5 319V331M455 319V331M491 319V331M527 319V331M563 319V331M600 319V331M346 319V331" stroke="#777" stroke-width=".8"/>
<text class="sd" x="353.7" y="328" textLength="21.5" lengthAdjust="spacingAndGlyphs">1 First</text>
<text class="sd" x="389.4" y="328" textLength="21.9" lengthAdjust="spacingAndGlyphs">2 Prev</text>
<text class="sd" x="425.6" y="328" textLength="22.3" lengthAdjust="spacingAndGlyphs">3 Next</text>
<text class="sd" x="462.3" y="328" textLength="21" lengthAdjust="spacingAndGlyphs">4 Last</text>
<text class="sk" x="498.5" y="328" textLength="21.5" lengthAdjust="spacingAndGlyphs">5 Add</text>
<text class="sk" x="531.7" y="328" textLength="28.2" lengthAdjust="spacingAndGlyphs">6 Delete</text>
<text class="sk" x="572.5" y="328" textLength="19.4" lengthAdjust="spacingAndGlyphs">7 Exit</text>
<path d="M375 335V344M466 335V344M511.5 335V344M579 335V344M643 335V344M704 335V344M739.6 335V344M774.5 335V344M806 335V344M880 333V345" stroke="#777" stroke-width=".8"/>
<text class="st" x="344" y="342" textLength="28.2" lengthAdjust="spacingAndGlyphs">NHAMCS</text>
<text class="st" x="377.7" y="342" textLength="86.3" lengthAdjust="spacingAndGlyphs">Frequently asked questions</text>
<text class="st" x="469.4" y="342" textLength="40.4" lengthAdjust="spacingAndGlyphs">Appointment</text>
<text class="st" x="514.9" y="342" textLength="61" lengthAdjust="spacingAndGlyphs">Patient Information</text>
<text class="st" x="581.8" y="342" textLength="58.5" lengthAdjust="spacingAndGlyphs">Injury or Poisoning</text>
<text class="st" x="645.3" y="342" textLength="55.6" lengthAdjust="spacingAndGlyphs">Continuity of care</text>
<text class="st" x="706.8" y="342" textLength="29" lengthAdjust="spacingAndGlyphs">Diagnosis</text>
<text class="st" x="742.1" y="342" textLength="29.5" lengthAdjust="spacingAndGlyphs">vital signs</text>
<text class="st" x="777.5" y="342" textLength="25.7" lengthAdjust="spacingAndGlyphs">Services</text>
<text class="st" x="809" y="342" textLength="32.8" lengthAdjust="spacingAndGlyphs">Disposition</text>
<text class="st" x="847.4" y="341" textLength="29" lengthAdjust="spacingAndGlyphs">Lookback</text>
<rect x="342" y="346" width="616" height="1.5" fill="#7c7c78"/>
<rect x="342" y="346" width="1.5" height="149" fill="#7c7c78"/><rect x="955.5" y="346" width="1.5" height="149" fill="#7c7c78"/>
<rect x="343.5" y="347.5" width="612" height="87.5" fill="#ffffe0"/>
<rect x="343.5" y="435" width="612" height="1.5" fill="#7c7c78"/>
<rect x="343.5" y="436.5" width="612" height="28.5" fill="#ffffe0"/>
<rect x="343.5" y="465" width="612" height="1.5" fill="#7c7c78"/>
<use href="#dia" x="354.6" y="359" width="4" height="6"/>
<text class="sb" x="364" y="366" textLength="315" lengthAdjust="spacingAndGlyphs">Was a total cholesterol test performed within the 15 months before 5/4/2011?</text>
<text class="sb" x="367" y="388" textLength="157" lengthAdjust="spacingAndGlyphs">Reference Time: 1/29/2010 - 5/4/2011</text>
<circle cx="348" cy="441.5" r="2.7" fill="#fff" stroke="#777" stroke-width=".7"/>
<circle cx="348" cy="452" r="2.7" fill="#fff" stroke="#777" stroke-width=".7"/>
<text x="353" y="444" font-size="8.5" fill="#555" textLength="23" lengthAdjust="spacingAndGlyphs">1. Yes</text>
<text x="353" y="455" font-size="8.5" fill="#555" textLength="59" lengthAdjust="spacingAndGlyphs">2. No / not found</text>
<text class="sb" x="344" y="477" textLength="47.5" lengthAdjust="spacingAndGlyphs">Cholesterol</text>
<rect x="417.6" y="467" width="14.4" height="14" fill="#fff" stroke="#999" stroke-width=".8"/>
<!-- shot 2 -->
<rect x="340" y="498" width="617.5" height="416" fill="#d4d0c8"/>
<rect x="340" y="498" width="1" height="416" fill="#222"/><rect x="956.5" y="498" width="1.5" height="416" fill="#333"/>
<rect x="341" y="500" width="616" height="7.5" fill="url(#cap)"/>
<rect x="344" y="500" width="7" height="7.5" fill="#1a7a8a"/>
<text x="352.4" y="506" font-size="7" font-weight="bold" fill="#fff" textLength="215.6" lengthAdjust="spacingAndGlyphs">National Hospital Ambulatory Medical Care Survey (NHAMCS-201) - version 1.27</text>
<rect x="949" y="502" width="6" height="5" fill="#d4d0c8" stroke="#333" stroke-width=".5"/>
<text class="s" x="344.8" y="515" textLength="14.3" lengthAdjust="spacingAndGlyphs">Forms</text>
<text class="s" x="365" y="515" textLength="16.8" lengthAdjust="spacingAndGlyphs">Answer</text>
<text class="s" x="388.2" y="515" textLength="20.6" lengthAdjust="spacingAndGlyphs">Navigate</text>
<text class="s" x="414.7" y="515" textLength="17.7" lengthAdjust="spacingAndGlyphs">Options</text>
<text class="s" x="437.8" y="515" textLength="10.1" lengthAdjust="spacingAndGlyphs">Help</text>
<text class="s" x="453.8" y="515" textLength="46.7" lengthAdjust="spacingAndGlyphs">Hide Watch Window</text>
<rect x="346" y="518.5" width="255" height="13" fill="none" stroke="#f4f4f0" stroke-width=".8"/>
<path d="M348.6 519V531M384 519V531M420.2 519V531M456.8 519V531M493 519V531M528.8 519V531M565 519V531M600.7 519V531" stroke="#777" stroke-width=".8"/>
<text class="sd" x="355.8" y="528" textLength="20.6" lengthAdjust="spacingAndGlyphs">1 First</text>
<text class="sd" x="391.1" y="528" textLength="21.5" lengthAdjust="spacingAndGlyphs">2 Prev</text>
<text class="sd" x="427.3" y="528" textLength="22.3" lengthAdjust="spacingAndGlyphs">3 Next</text>
<text class="sd" x="463.9" y="528" textLength="21" lengthAdjust="spacingAndGlyphs">4 Last</text>
<text class="sk" x="500.1" y="528" textLength="21" lengthAdjust="spacingAndGlyphs">5 Add</text>
<text class="sk" x="532.5" y="528" textLength="28.6" lengthAdjust="spacingAndGlyphs">6 Delete</text>
<text class="sk" x="573.4" y="528" textLength="19.4" lengthAdjust="spacingAndGlyphs">7 Exit</text>
<path d="M376.8 535V544M468.1 535V544M513.2 535V544M579.7 535V544M643.2 535V544M704.7 535V544M739.2 535V544M774.5 535V544M806.1 535V544M879.3 533V545" stroke="#777" stroke-width=".8"/>
<text class="st" x="346.1" y="542" textLength="27.8" lengthAdjust="spacingAndGlyphs">NHAMCS</text>
<text class="st" x="379.8" y="542" textLength="85.4" lengthAdjust="spacingAndGlyphs">Frequently asked questions</text>
<text class="st" x="471.1" y="542" textLength="39.6" lengthAdjust="spacingAndGlyphs">Appointment</text>
<text class="st" x="516.1" y="542" textLength="60.6" lengthAdjust="spacingAndGlyphs">Patient Information</text>
<text class="st" x="582.6" y="542" textLength="58.5" lengthAdjust="spacingAndGlyphs">Injury or Poisoning</text>
<text class="st" x="646.2" y="542" textLength="55.1" lengthAdjust="spacingAndGlyphs">Continuity of care</text>
<text class="st" x="706.8" y="542" textLength="29" lengthAdjust="spacingAndGlyphs">Diagnosis</text>
<text class="st" x="742.1" y="542" textLength="29" lengthAdjust="spacingAndGlyphs">vital signs</text>
<text class="st" x="777.5" y="542" textLength="25.3" lengthAdjust="spacingAndGlyphs">Services</text>
<text class="st" x="808.6" y="542" textLength="32.8" lengthAdjust="spacingAndGlyphs">Disposition</text>
<text class="st" x="846.5" y="541" textLength="29" lengthAdjust="spacingAndGlyphs">Lookback</text>
<rect x="344" y="545.5" width="613" height="1.5" fill="#7c7c78"/>
<rect x="344" y="545.5" width="1.2" height="368.5" fill="#7c7c78"/><rect x="955" y="545.5" width="1.2" height="368.5" fill="#7c7c78"/>
<rect x="345" y="547" width="610" height="117" fill="#ffffe0"/>
<rect x="345" y="664" width="610" height="1.5" fill="#7c7c78"/>
<use href="#dia" x="356.5" y="559" width="4" height="6"/>
<text class="sb" x="367" y="566" textLength="198" lengthAdjust="spacingAndGlyphs">Total cholesterol result  (Start with the oldest test)</text>
<text class="sb" x="373.5" y="587" textLength="92.5" lengthAdjust="spacingAndGlyphs">Enter '999' for no more</text>
<path d="M345 679H955M364 665V914M463.5 665V914M562.4 665V914M616.3 665V914M676.5 665V914" stroke="#a8a59e" stroke-width=".9"/>
<text x="365.5" y="675" font-size="9.5" fill="#222" textLength="38.5" lengthAdjust="spacingAndGlyphs">Visit Date</text>
<text x="465" y="675" font-size="9.5" fill="#222" textLength="65.5" lengthAdjust="spacingAndGlyphs">Reference Time</text>
<text class="sb" x="564" y="675" textLength="51.5" lengthAdjust="spacingAndGlyphs">Chol Results</text>
<text x="618" y="675" font-size="9.5" fill="#222" textLength="40" lengthAdjust="spacingAndGlyphs">Chol Date</text>
<rect x="370.5" y="680.5" width="91.5" height="13.5" fill="#d4d0c8" stroke="#888" stroke-width=".7"/>
<rect x="469.4" y="680.5" width="91.3" height="13.5" fill="#d4d0c8" stroke="#888" stroke-width=".7"/>
<rect x="569" y="680.5" width="36" height="13" fill="#fff" stroke="#888"/>
<rect x="623" y="680.5" width="51" height="13.5" fill="#fff" stroke="#e8e8e4"/>
<text class="st" x="372" y="691" textLength="35.5" lengthAdjust="spacingAndGlyphs">5/4/2011</text>
<text class="st" x="471.5" y="691" textLength="41.5" lengthAdjust="spacingAndGlyphs">1/29/2010</text>
<text class="st" x="348" y="691.5" textLength="10" lengthAdjust="spacingAndGlyphs" style="fill:#0000ee">[1]</text>
<text class="st" x="348" y="706.5" textLength="10" lengthAdjust="spacingAndGlyphs">[2]</text>
<text class="st" x="348" y="721.5" textLength="10" lengthAdjust="spacingAndGlyphs">[3]</text>
<text class="st" x="348" y="736.5" textLength="10" lengthAdjust="spacingAndGlyphs">[4]</text>
<text class="st" x="348" y="751" textLength="10" lengthAdjust="spacingAndGlyphs">[5]</text>
<text class="st" x="348" y="766" textLength="10" lengthAdjust="spacingAndGlyphs">[6]</text>
<text class="st" x="348" y="781" textLength="10" lengthAdjust="spacingAndGlyphs">[7]</text>
<text class="st" x="348" y="796" textLength="10" lengthAdjust="spacingAndGlyphs">[8]</text>
<text class="st" x="348" y="811" textLength="10" lengthAdjust="spacingAndGlyphs">[9]</text>
<text class="st" x="348" y="826" textLength="15" lengthAdjust="spacingAndGlyphs">[10]</text>
<text class="st" x="348" y="841" textLength="15" lengthAdjust="spacingAndGlyphs">[11]</text>
<text class="st" x="348" y="856" textLength="15" lengthAdjust="spacingAndGlyphs">[12]</text>
<text class="st" x="348" y="871" textLength="15" lengthAdjust="spacingAndGlyphs">[13]</text>
<text class="st" x="348" y="886" textLength="15" lengthAdjust="spacingAndGlyphs">[14]</text>
<text class="st" x="348" y="900.5" textLength="15" lengthAdjust="spacingAndGlyphs">[15]</text>
</g>

<!-- Status bar -->
<path d="M71 965 H1232 V983 Q1232 988 1228 988 H75 Q71 988 71 983Z" fill="url(#stat)"/>
<rect x="71" y="965" width="1161" height="1.2" fill="#6f93c2"/>
<text class="w" x="82" y="981" textLength="71" lengthAdjust="spacingAndGlyphs" style="fill:#3a4f78">Page: 10 of 10</text>
<text class="w" x="172" y="981" textLength="51" lengthAdjust="spacingAndGlyphs" style="fill:#3a4f78">Words: 15</text>
<path d="M163 967V986M233 967V986M267 967V986M939 967V986" stroke="#9fb9dc"/>
<path d="M241 979 L252 972 L259 978 L249 984Z" fill="#fff" stroke="#4a6a9a"/><path d="M250 970 L258 978 M258 970 L250 978" stroke="#e23a2a" stroke-width="2"/>
<rect x="946" y="968" width="18" height="16" fill="#fbd476" stroke="#a9b9d0"/><rect x="951" y="970" width="9" height="12" fill="#fff" stroke="#333"/><path d="M952.5 973H958.5M952.5 976H958.5M952.5 979H958.5" stroke="#333"/>
<rect x="964" y="968" width="73" height="16" fill="#d6e4f6" stroke="#a9bfdd"/>
<path d="M966 971H971V981H966ZM972 971H977V981H972Z" fill="#fff" stroke="#444"/>
<rect x="984" y="971" width="9" height="10" fill="#fff" stroke="#444"/><circle cx="992" cy="980" r="3" fill="#2a8a6a"/>
<path d="M1003 972H1013M1006 975H1013M1006 978H1013M1003 981H1013" stroke="#555"/>
<path d="M1022 972H1032M1022 974.5H1032M1022 977H1032M1022 979.5H1032M1022 982H1032" stroke="#555"/>
<text x="1044" y="981" font-size="13" fill="#2a4a8a" textLength="22" lengthAdjust="spacingAndGlyphs">85%</text>
<path d="M1090 976.5 H1193" stroke="#eef4fb" stroke-width="1.3"/>
<circle cx="1083" cy="976" r="7.5" fill="#dbe7f6" stroke="#5a7aa8" stroke-width="1.5"/><path d="M1079 976H1087" stroke="#2a3a5a" stroke-width="2"/>
<circle cx="1200.6" cy="976" r="7.5" fill="#dbe7f6" stroke="#5a7aa8" stroke-width="1.5"/><path d="M1196 976H1205M1200.6 971.5V980.5" stroke="#2a3a5a" stroke-width="2"/>
<path d="M1130 969H1138V978L1134 983L1130 978Z" fill="#e9f0f9" stroke="#4a6a9a"/>
<path d="M1143 972V981" stroke="#eef4fb"/>
<g fill="#5a7aa8"><rect x="1218" y="981" width="2" height="2"/><rect x="1222" y="981" width="2" height="2"/><rect x="1226" y="981" width="2" height="2"/><rect x="1222" y="977" width="2" height="2"/><rect x="1226" y="977" width="2" height="2"/><rect x="1226" y="973" width="2" height="2"/></g>

<!-- DEP watch -->
<rect x="1156" y="208" width="216" height="165" fill="#d4d0c8" stroke="#555" stroke-width="1.5"/>
<rect x="1158" y="213" width="212" height="14" fill="url(#gcap)"/>
<text x="1161" y="224" font-size="13" font-weight="bold" fill="#d4d0c8" textLength="173" lengthAdjust="spacingAndGlyphs">DEP Watch Window - 00020101</text>
<rect x="1358" y="214" width="9" height="11" fill="#d4d0c8" stroke="#333"/><path d="M1360 217L1365 222M1365 217L1360 222" stroke="#000"/>
<rect x="1162" y="230" width="205" height="118" fill="#fff" stroke="#555"/>
<rect x="1160" y="352" width="208" height="16" fill="#d4d0c8" stroke="#808080"/>
<path d="M1356 367L1367 356M1360 367L1367 360M1364 367L1367 364" stroke="#777"/>

<!-- Main right window -->
<rect x="1442" y="0" width="1278" height="1024" fill="#d4d0c8"/>
<rect x="1442" y="0" width="1278" height="2.5" fill="#f0efea"/>
<rect x="1443" y="0" width="2" height="996" fill="#f0efea"/>
<rect x="1445" y="3.5" width="1271" height="17.5" fill="url(#cap)"/>
<rect x="1446" y="4" width="16" height="16" fill="#1a7a8a"/><path d="M1450 17 C1450 12 1452 8 1458 7 C1460 10 1456 11 1454 12 L1454 17Z" fill="#fff"/>
<text x="1462" y="16" font-size="14" font-weight="bold" fill="#fff" textLength="449" lengthAdjust="spacingAndGlyphs">National Hospital Ambulatory Medical Care Survey (NHAMCS-201) - version 1.27</text>
<rect x="2699" y="5" width="15" height="14" fill="#d4d0c8" stroke="#222"/><path d="M2703 8L2710 15M2710 8L2703 15" stroke="#000" stroke-width="1.6"/>
<text class="m" x="1448" y="35" textLength="29" lengthAdjust="spacingAndGlyphs">Forms</text>
<text class="m" x="1490" y="35" textLength="35" lengthAdjust="spacingAndGlyphs">Answer</text>
<text class="m" x="1538" y="35" textLength="42" lengthAdjust="spacingAndGlyphs">Navigate</text>
<text class="m" x="1593" y="35" textLength="36.5" lengthAdjust="spacingAndGlyphs">Options</text>
<text class="m" x="1642" y="35" textLength="20" lengthAdjust="spacingAndGlyphs">Help</text>
<text class="m" x="1674.5" y="35" textLength="95.5" lengthAdjust="spacingAndGlyphs">Hide Watch Window</text>
<!-- toolbar -->
<path d="M1442.5 69V41H1980.5" fill="none" stroke="#fff"/><path d="M1980.5 41V69H1442.5" fill="none" stroke="#808080"/>
<path d="M1447 44V66M1450 44V66" stroke="#808080"/><path d="M1448 44V66M1451 44V66" stroke="#fff"/>
<g fill="none" stroke-width="1.3">
<path d="M1454.5 67V43.5H1529" stroke="#fff"/><path d="M1529 43.5V67H1454.5" stroke="#555"/>
<path d="M1529.7 67V43.5H1603.8" stroke="#fff"/><path d="M1603.8 43.5V67H1529.7" stroke="#555"/>
<path d="M1604.5 67V43.5H1678.7" stroke="#fff"/><path d="M1678.7 43.5V67H1604.5" stroke="#555"/>
<path d="M1679.4 67V43.5H1754" stroke="#fff"/><path d="M1754 43.5V67H1679.4" stroke="#555"/>
<path d="M1754.7 67V43.5H1828.6" stroke="#fff"/><path d="M1828.6 43.5V67H1754.7" stroke="#555"/>
<path d="M1829.3 67V43.5H1904" stroke="#fff"/><path d="M1904 43.5V67H1829.3" stroke="#555"/>
<path d="M1904.7 67V43.5H1979" stroke="#fff"/><path d="M1979 43.5V67H1904.7" stroke="#555"/>
</g>
<text class="d" x="1470" y="62" textLength="44" lengthAdjust="spacingAndGlyphs">1 First</text>
<text class="d" x="1544.5" y="62" textLength="44.5" lengthAdjust="spacingAndGlyphs">2 Prev</text>
<text class="d" x="1619" y="62" textLength="47" lengthAdjust="spacingAndGlyphs">3 Next</text>
<text class="d" x="1696" y="62" textLength="42.5" lengthAdjust="spacingAndGlyphs">4 Last</text>
<text class="b" x="1770" y="62" textLength="42" lengthAdjust="spacingAndGlyphs">5 Add</text>
<text class="b" x="1837" y="62" textLength="58" lengthAdjust="spacingAndGlyphs">6 Delete</text>
<text class="b" x="1922" y="62" textLength="40" lengthAdjust="spacingAndGlyphs">7 Exit</text>
<path d="M1470 64H1479M1544.5 64H1553.5M1619 64H1628M1696 64H1705" stroke="#808080"/>
<path d="M1770 64H1779M1837 64H1846M1922 64H1931" stroke="#000"/>
<!-- tabs -->
<g fill="none" stroke-width="1.3">
<path d="M1446 95V75Q1446 73 1448 73H1514" stroke="#fff"/><path d="M1514 74V95" stroke="#444"/>
<path d="M1516.3 95V75Q1516.3 73 1518 73H1702.7" stroke="#fff"/><path d="M1702.7 74V95" stroke="#444"/>
<path d="M1704.4 95V75Q1704.4 73 1706 73H1797.4" stroke="#fff"/><path d="M1797.4 74V95" stroke="#444"/>
<path d="M1799 95V75Q1799 73 1801 73H1933.8" stroke="#fff"/><path d="M1933.8 74V95" stroke="#444"/>
<path d="M1935.5 95V75Q1935.5 73 1937 73H2066.8" stroke="#fff"/><path d="M2066.8 74V95" stroke="#444"/>
<path d="M2068.5 95V75Q2068.5 73 2070 73H2193" stroke="#fff"/><path d="M2193 74V95" stroke="#444"/>
<path d="M2194.7 95V75Q2194.7 73 2196 73H2265" stroke="#fff"/><path d="M2265 74V95" stroke="#444"/>
<path d="M2266.6 95V75Q2266.6 73 2268 73H2339" stroke="#fff"/><path d="M2339 74V95" stroke="#444"/>
<path d="M2340.7 95V75Q2340.7 73 2342 73H2404.3" stroke="#fff"/><path d="M2404.3 74V95" stroke="#444"/>
<path d="M2406 95V75Q2406 73 2408 73H2482" stroke="#fff"/>
<path d="M2484 96V72Q2484 70 2486 70H2556.6" stroke="#fff"/><path d="M2556.6 71V96" stroke="#444"/>
<path d="M1446 95.5H2484M2557 95.5H2716" stroke="#fff"/>
</g>
<text class="t" x="1450" y="90" textLength="59" lengthAdjust="spacingAndGlyphs">NHAMCS</text>
<text class="t" x="1520.5" y="90" textLength="176.5" lengthAdjust="spacingAndGlyphs">Frequently asked questions</text>
<text class="t" x="1710" y="90" textLength="82" lengthAdjust="spacingAndGlyphs">Appointment</text>
<text class="t" x="1804" y="90" textLength="125" lengthAdjust="spacingAndGlyphs">Patient Information</text>
<text class="t" x="1941" y="90" textLength="120" lengthAdjust="spacingAndGlyphs">Injury or Poisoning</text>
<text class="t" x="2073.5" y="90" textLength="113.5" lengthAdjust="spacingAndGlyphs">Continuity of care</text>
<text class="t" x="2200" y="90" textLength="58.7" lengthAdjust="spacingAndGlyphs">Diagnosis</text>
<text class="t" x="2272.5" y="90" textLength="61" lengthAdjust="spacingAndGlyphs">vital signs</text>
<text class="t" x="2345" y="90" textLength="53" lengthAdjust="spacingAndGlyphs">Services</text>
<text class="t" x="2410.6" y="90" textLength="67" lengthAdjust="spacingAndGlyphs">Disposition</text>
<text class="t" x="2489.7" y="88" textLength="59.3" lengthAdjust="spacingAndGlyphs">Lookback</text>
<!-- panels -->
<rect x="1447" y="98" width="1266" height="1.8" fill="#555"/>
<rect x="1447" y="98" width="1.5" height="896" fill="#555"/>
<rect x="2711.5" y="98" width="1.5" height="896" fill="#777"/>
<rect x="2714.5" y="96" width="1.5" height="900" fill="#fff"/>
<rect x="1448.5" y="100" width="1263" height="183" fill="#ffffe0"/>
<rect x="1448.5" y="283" width="1263" height="1.5" fill="#d4d0c8"/>
<rect x="1448.5" y="284.5" width="1263" height="2" fill="#555"/>
<rect x="1448.5" y="286.5" width="1263" height="58.5" fill="#ffffe0"/>
<rect x="1448.5" y="345" width="1263" height="1" fill="#d4d0c8"/>
<rect x="1448.5" y="346" width="1263" height="2" fill="#777"/>
<use href="#dia" x="1473" y="128" width="7.5" height="9.5"/>
<text class="q" x="1492" y="141" textLength="765" lengthAdjust="spacingAndGlyphs">Was a high density lipoprotein (HDL) test performed within the 15 months before 5/4/2011?</text>
<text class="q" x="1497" y="185" textLength="323.6" lengthAdjust="spacingAndGlyphs">Reference Time: 1/29/2010 - 5/4/2011</text>
<circle cx="1457" cy="297" r="5.5" fill="#fff" stroke="#b8b8b4" stroke-width="1.2"/><path d="M1453 301 A5.5 5.5 0 0 1 1461 293" fill="none" stroke="#555" stroke-width="1.4"/>
<circle cx="1457" cy="319" r="5.5" fill="#fff" stroke="#b8b8b4" stroke-width="1.2"/><path d="M1453 323 A5.5 5.5 0 0 1 1461 315" fill="none" stroke="#555" stroke-width="1.4"/>
<text class="t" x="1469" y="303" textLength="46.5" lengthAdjust="spacingAndGlyphs">1.  Yes</text>
<text class="t" x="1469" y="325" textLength="122" lengthAdjust="spacingAndGlyphs">2.  No / not found</text>
<rect x="1449.5" y="349.5" width="183" height="29.5" fill="none" stroke="#000" stroke-dasharray="1 1"/>
<text x="1451" y="371" font-size="19" fill="#0000ff" textLength="37" lengthAdjust="spacingAndGlyphs">HDL</text>
<rect x="1602" y="351" width="28" height="27" fill="#fff"/>
<path d="M1602 378V351H1630" fill="none" stroke="#555" stroke-width="1.4"/><path d="M1630 351V378H1602" fill="none" stroke="#ddd"/>
<path d="M1627.8 352.5V376" stroke="#000" stroke-width="1.2"/>
<!-- taskbar -->
<rect x="1442" y="995" width="1278" height="1.5" fill="#fff"/>
<rect x="1442" y="997" width="1278" height="27" fill="#d4d0c8"/>
<g fill="none" stroke-width="1.2">
<path d="M1443 1019V998H1494" stroke="#fff"/><path d="M1494 998V1019H1443" stroke="#333"/>
<path d="M1572 1019V998H1677.5" stroke="#fff"/><path d="M1677.5 998V1019H1572" stroke="#444"/>
<path d="M1681 1019V998H1786.5" stroke="#fff"/><path d="M1786.5 998V1019H1681" stroke="#444"/>
<path d="M1790 1019V998H1895.5" stroke="#fff"/><path d="M1895.5 998V1019H1790" stroke="#444"/>
<path d="M1899 1019V998H2004.5" stroke="#fff"/><path d="M2004.5 998V1019H1899" stroke="#444"/>
<path d="M2008 1019V998H2113.5" stroke="#fff"/><path d="M2113.5 998V1019H2008" stroke="#444"/>
<path d="M2117 1019V998H2222.5" stroke="#fff"/><path d="M2222.5 998V1019H2117" stroke="#444"/>
<path d="M2226 1019V998H2331.5" stroke="#fff"/><path d="M2331.5 998V1019H2226" stroke="#444"/>
<path d="M2335 1019V998H2440.5" stroke="#fff"/><path d="M2440.5 998V1019H2335" stroke="#444"/>
</g>
<rect x="2444" y="998" width="106" height="21" fill="url(#dith)"/>
<path d="M2444 1019V998H2550" fill="none" stroke="#333" stroke-width="1.3"/><path d="M2550 998V1019H2444" fill="none" stroke="#fff" stroke-width="1.2"/>
<g><rect x="1445" y="1002" width="6" height="6" fill="#e04020"/><rect x="1452" y="1001" width="6" height="6" fill="#60b030"/><rect x="1445" y="1009" width="6" height="6" fill="#3a70d0"/><rect x="1452" y="1008" width="6" height="6" fill="#f0c020"/></g>
<text x="1461.6" y="1013" font-size="14" font-weight="bold" fill="#000" textLength="28.4" lengthAdjust="spacingAndGlyphs">Start</text>
<use href="#ie" x="1502" y="1000" width="18" height="19"/>
<use href="#ff" x="1524" y="1000" width="18" height="19"/>
<rect x="1548" y="1002" width="14" height="14" rx="3" fill="#3a8ae0" stroke="#1a4a90"/><path d="M1552 1006H1559M1552 1009H1557M1552 1012H1559" stroke="#fff" stroke-width="1.4"/>
<rect x="1583" y="1002" width="13" height="10" fill="#fff" stroke="#555"/><rect x="1583" y="1001" width="13" height="3" fill="#d02020"/><path d="M1577 1012 L1585 1008 V1016Z" fill="#4a8ac0"/>
<text class="tb" x="1595.4" y="1012" textLength="76.6" lengthAdjust="spacingAndGlyphs">Novell-deliver...</text>
<use href="#ff" x="1685" y="1000" width="18" height="18"/>
<text class="tb" x="1705" y="1012" textLength="76.4" lengthAdjust="spacingAndGlyphs">Gmail - Inbox ...</text>
<use href="#ff" x="1794" y="1000" width="18" height="18"/>
<text class="tb" x="1814" y="1012" textLength="75.6" lengthAdjust="spacingAndGlyphs">Welcome to t...</text>
<use href="#ie" x="1903" y="1000" width="18" height="18"/>
<text class="tb" x="1922" y="1012" textLength="74" lengthAdjust="spacingAndGlyphs">Inbox - Wind...</text>
<path d="M2013 1003H2027L2029 1007L2020 1016L2011 1007Z" fill="#f0c020" stroke="#c01818" stroke-width="1.6"/><path d="M2017 1007H2023L2020 1012Z" fill="#fff"/>
<text class="tb" x="2032" y="1012" textLength="72" lengthAdjust="spacingAndGlyphs">WBT - TMOU...</text>
<path d="M2122 1003H2129L2131 1005H2138V1015H2122Z" fill="#f0c850" stroke="#8a7020"/>
<text class="tb" x="2141" y="1012" textLength="45" lengthAdjust="spacingAndGlyphs">SAS_Files</text>
<rect x="2231" y="1002" width="14" height="15" fill="#eef6ee" stroke="#3a8a3a"/><text x="2235" y="1015" font-size="12" font-weight="bold" fill="#1a7a1a">X</text>
<text class="tb" x="2249" y="1012" textLength="72" lengthAdjust="spacingAndGlyphs">Microsoft Excel</text>
<ellipse cx="2347" cy="1008" rx="7.5" ry="6.5" fill="#20e8f0" stroke="#000"/><path d="M2351 1013L2355 1018" stroke="#000"/>
<text class="tb" x="2358" y="1012" textLength="72" lengthAdjust="spacingAndGlyphs">Lotus Sameti...</text>
<rect x="2449" y="1001" width="14" height="15" fill="#eaf0fa" stroke="#5a7ac0"/><text x="2450" y="1015" font-size="11" font-weight="bold" font-style="italic" fill="#2a52a8">W</text>
<text x="2467" y="1013" font-size="14" font-weight="bold" fill="#000" textLength="74" lengthAdjust="spacingAndGlyphs">2 Microsoft...</text>
<path d="M2543 1009H2548L2545.5 1012Z" fill="#000"/>
<rect x="2563" y="1002" width="12.6" height="15" fill="#fffbd0" stroke="#223"/><text x="2566" y="1014" font-size="11" font-weight="bold" fill="#1a2a8a">?</text>
<path d="M2583 999V1020" stroke="#808080"/><path d="M2584 999V1020" stroke="#fff"/>
<rect x="2589" y="1002" width="5" height="4" fill="none" stroke="#222"/><rect x="2591" y="1000" width="5" height="4" fill="#d4d0c8" stroke="#222"/>
<path d="M2589 1013H2595L2592 1016Z" fill="#222"/>
<path d="M2605.5 1019V998H2716.5" fill="none" stroke="#808080"/><path d="M2716.5 998V1019H2605.5" fill="none" stroke="#fff"/>
<text x="2610" y="1014" font-size="13" font-weight="bold" fill="#000">«</text>
<ellipse cx="2630" cy="1008" rx="7" ry="6.5" fill="#20d8e0" stroke="#000"/><path d="M2625 1017L2631 1011L2635 1017Z" fill="#188838"/>
<circle cx="2649" cy="1009" r="8" fill="#1a28c0"/><path d="M2642 1009H2645L2647 1004L2650 1014L2652 1006L2654 1009H2657" fill="none" stroke="#f0d020" stroke-width="1.2"/>
<text class="tb" x="2664" y="1012" textLength="46" lengthAdjust="spacingAndGlyphs">11:57 AM</text>
</svg>
</body></html>
